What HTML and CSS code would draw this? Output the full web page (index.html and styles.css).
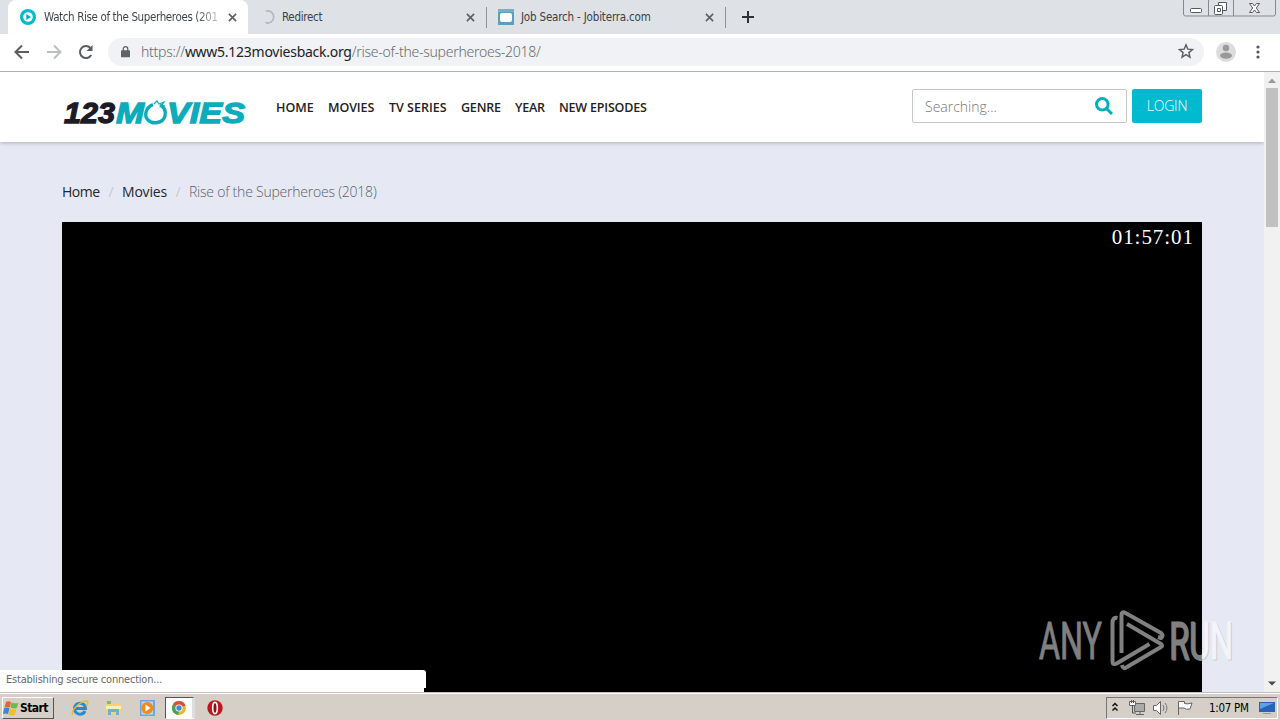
FILE: index.html
```html
<!DOCTYPE html>
<html lang="en">
<head>
  <meta charset="UTF-8">
  <meta name="viewport" content="width=device-width, initial-scale=1.0">
  <title>Watch Rise of the Superheroes (2018)</title>
  <link rel="stylesheet" href="styles.css">
</head>
<body>
  <!-- Browser tabs -->
  <div class="tabs">
    <div class="tab active">
      <svg class="favicon" viewBox="0 0 16 16"><circle cx="8" cy="8" r="8" fill="#00bcd0"/><circle cx="8" cy="8" r="4.800" fill="#fff"/><path d="M6.300 5 11 8l-4.700 3z" fill="#00aebf"/></svg>
      <span class="tab-title title-movie">Watch Rise of the Superheroes (201</span>
      <svg class="close" viewBox="0 0 10 10"><path d="M1 1l8 8M9 1L1 9"/></svg>
    </div>
    <div class="tab tab-redirect">
      <svg class="favicon" viewBox="0 0 16 16"><path d="M6 2.200A6 6 0 1 1 5.500 13.500" fill="none" stroke="#b5b8be" stroke-width="1.800"/></svg>
      <span class="tab-title title-redirect">Redirect</span>
      <svg class="close" viewBox="0 0 10 10"><path d="M1 1l8 8M9 1L1 9"/></svg>
    </div>
    <div class="tab tab-job">
      <svg class="favicon" viewBox="0 0 16 16"><path d="M0 0h16v16H0z" fill="#5c9fba"/><path d="M0 0h16v3H0z" fill="#72b1c8"/><rect x="2" y="4" width="12" height="9" rx="2" fill="#fff"/></svg>
      <span class="tab-title title-job">Job Search - Jobiterra.com</span>
      <svg class="close" viewBox="0 0 10 10"><path d="M1 1l8 8M9 1L1 9"/></svg>
    </div>
    <svg class="new-tab" viewBox="0 0 12 12"><path d="M6 0v12M0 6h12" stroke="#2e3136" stroke-width="2"/></svg>
    <div class="window-buttons">
      <svg viewBox="0 0 93 17" width="93" height="17"><path d="M.5 0v14q0 2 2 2h88q2 0 2-2V0M25.500 0v16M50.500 0v16" fill="none" stroke="#858991"/><rect x="7.500" y="8.500" width="11" height="4" rx="1" fill="#fff" stroke="#55585f"/><path d="M35.500 2.500h8v8h-8z" fill="#fff" stroke="#55585f"/><rect x="31.500" y="5.500" width="8" height="9" rx="1" fill="#fff" stroke="#55585f"/><path d="M34.500 8.500h3v3h-3z" fill="none" stroke="#55585f"/><path d="M66.500 3.500h3l2 2.500 2-2.500h3L73.300 8l3.200 4.500h-3l-2-2.500-2 2.500h-3L69.700 8z" fill="#fff" stroke="#55585f"/></svg>
    </div>
  </div>

  <!-- Address bar -->
  <div class="toolbar">
    <svg class="nav-icon" viewBox="0 0 16 16"><path d="M15 8H2M8 1.500L1.500 8 8 14.500" stroke="#5a5d62"/></svg>
    <svg class="nav-icon" viewBox="0 0 16 16"><path d="M1 8h13M8 1.500L14.500 8 8 14.500" stroke="#bcbec1"/></svg>
    <svg class="nav-icon" viewBox="0 0 16 16"><path d="M13.200 11A6 6 0 1 1 12.400 4" stroke="#5a5d62"/><path d="M14.500 1v6h-6z" fill="#5a5d62"/></svg>
    <div class="address">
      <svg class="lock" viewBox="0 0 10 13"><rect y="5" width="10" height="8" rx="1" fill="#5f6368"/><path d="M2.500 6V3.500a2.500 2.500 0 0 1 5 0V6" fill="none" stroke="#5f6368" stroke-width="1.400"/></svg>
      <span class="url">https://<b>www5.123moviesback.org</b>/rise-of-the-superheroes-2018/</span>
      <svg class="star" viewBox="0 0 16 16"><path d="M8 1.800l1.800 4.300 4.700.4-3.600 3.100 1.100 4.600L8 11.700l-4 2.500 1.100-4.600L1.500 6.500l4.700-.4z" fill="none" stroke="#5a5d62" stroke-width="1.400"/></svg>
    </div>
    <svg class="avatar" viewBox="0 0 20 20"><circle cx="10" cy="10" r="10" fill="#dcdcdc"/><circle cx="10" cy="6" r="3.200" fill="#999"/><ellipse cx="10" cy="13.600" rx="6" ry="3.100" fill="#999"/></svg>
    <svg class="dots" viewBox="0 0 4 14"><g fill="#55585d"><circle cx="2" cy="2" r="1.600"/><circle cx="2" cy="7" r="1.600"/><circle cx="2" cy="12" r="1.600"/></g></svg>
  </div>

  <!-- Page -->
  <div class="viewport">
    <div class="page">
      <header>
        <svg class="logo" viewBox="0 0 186 34">
          <g font-family="Liberation Sans, sans-serif" font-weight="bold" font-style="italic" font-size="30" stroke-width="1.300">
            <text x="2" y="26" textLength="51" lengthAdjust="spacingAndGlyphs" fill="#1b1c27" stroke="#1b1c27">123</text>
            <text x="54" y="26" textLength="28" lengthAdjust="spacingAndGlyphs" fill="#0cacbb" stroke="#0cacbb">M</text>
            <text x="105" y="26" textLength="78" lengthAdjust="spacingAndGlyphs" fill="#0cacbb" stroke="#0cacbb">VIES</text>
          </g>
          <path d="M91 7.500C83 11 82 19 86 23c5 5 15 3 17-4 1-5-1-9-5-11" fill="none" stroke="#0cacbb" stroke-width="3.400"/>
          <path d="M92 7l3-3 2 3 5-2-2 3 3 1" fill="none" stroke="#0cacbb" stroke-width="1.200"/>
        </svg>
        <nav>
          <a class="n1">HOME</a>
          <a class="n2">MOVIES</a>
          <a class="n3">TV SERIES</a>
          <a class="n4">GENRE</a>
          <a class="n5">YEAR</a>
          <a class="n6">NEW EPISODES</a>
        </nav>
        <div class="search">
          <span>Searching...</span>
          <svg viewBox="0 0 18 18"><circle cx="7.300" cy="7.300" r="5.800" fill="none" stroke="#00b1ba" stroke-width="3"/><path d="M11.500 11.500L17 17" stroke="#00b1ba" stroke-width="3"/></svg>
        </div>
        <div class="login"><span>LOGIN</span></div>
      </header>
      <div class="breadcrumb">
        <a class="b-home">Home</a><i>/</i><a class="b-movies">Movies</a><i>/</i><span>Rise of the Superheroes (2018)</span>
      </div>
      <div class="player"><span>01:57:01</span></div>
    </div>
    <div class="scrollbar">
      <svg viewBox="0 0 16 16"><path d="M4 11l4-4.500 4 4.500z" fill="#999"/></svg>
      <div class="thumb"></div>
      <svg class="down" viewBox="0 0 16 16"><path d="M4 5.500h8L8 9.500z" fill="#4a4a4a"/></svg>
    </div>
    <div class="status"><span>Establishing secure connection...</span></div>
  </div>

  <!-- Taskbar -->
  <div class="taskbar">
    <div class="start">
      <svg viewBox="0 0 16 16"><path d="M3 2q2-1.500 5 0L6.800 7.500Q4 6.500 1.500 7.500z" fill="#e5642c"/><path d="M8.500 2.500q3 1.500 7 .2L13.800 8q-3 1-6.300-.5z" fill="#72b844"/><path d="M1.200 8.200q2.700-1.400 5.300 0L5 14q-2.500-1.200-5 0z" fill="#3d83cf"/><path d="M7 8.500q3 1.500 6.500.5l-1.700 6q-3 1-6.300-.6z" fill="#f4bd2e"/></svg>
      <span>Start</span>
    </div>
    <div class="quick">
      <svg viewBox="0 0 18 18"><path d="M14 12a5.500 5.500 0 1 1 .5-2.500H4.500" fill="none" stroke="#258bd6" stroke-width="3"/><path d="M2 16C-1 12 9 2 16 2c2 1 0 4-1 5" fill="none" stroke="#e5bd35" stroke-width="1.400"/></svg>
      <svg viewBox="0 0 18 18"><path d="M1 3h5l1 2h9v10H1z" fill="#eed577"/><path d="M2 2h4v3H2z" fill="#7eba75"/><path d="M1 7h15v3H1z" fill="#fbf0b2"/><path d="M3 10h11v6h-3v-3H6v3H3z" fill="#6dafd5"/></svg>
      <svg viewBox="0 0 18 18"><path d="M1 1h15v16H1z" fill="#6aa8df"/><path d="M2.500 2.500H14v13H2.500z" fill="#b8d8f2"/><circle cx="8.300" cy="9" r="6" fill="#f18a1d"/><path d="M6.500 5.500l5 3.500-5 3.500z" fill="#fff"/></svg>
      <div class="chrome-task">
        <svg viewBox="0 0 16 16"><circle cx="8" cy="8" r="7" fill="#e8b928"/><path d="M8 8L2 4.300A7 7 0 0 1 14.500 5.500z" fill="#d94c3d"/><path d="M8 8L2 4.300A7 7 0 0 0 7.500 15z" fill="#46a257"/><circle cx="8" cy="8" r="3.600" fill="#fff"/><circle cx="8" cy="8" r="2.700" fill="#4585dc"/></svg>
      </div>
      <svg class="opera" viewBox="0 0 18 18"><circle cx="9" cy="9" r="7.700" fill="#bd171d"/><ellipse cx="9" cy="9" rx="2.300" ry="5.600" fill="#8b1015" stroke="#fff" stroke-width="1.600"/></svg>
    </div>
    <div class="tray">
      <svg class="chevrons" viewBox="0 0 8 12"><path d="M1.500 4L4 1.500 6.500 4M1.500 8.500L4 6l2.500 2.500" fill="none" stroke="#111" stroke-width="1.500"/></svg>
      <svg class="network" viewBox="0 0 16 16"><path d="M5.500 3.500h10v8h-10z" fill="#aaa" stroke="#666"/><path d="M7 14.500h8M11 12v2" stroke="#666"/><path d="M.5 1.500h6v4h-6z" fill="#fff" stroke="#666"/><path d="M2.500 0v3M4.500 0v3M3.500 5.500V13H7" fill="none" stroke="#555"/></svg>
      <svg class="sound" viewBox="0 0 16 16"><path d="M.5 5.500h3l4-4v13l-4-4h-3z" fill="#fff" stroke="#666"/><path d="M10 5q2 3 0 6M12 3q4 5 0 10" fill="none" stroke="#777"/></svg>
      <svg class="flag" viewBox="0 0 16 16"><path d="M1.500 15V1.500h6v2q3 1 7.500-.5L13 9q-4 1-6-1H2" fill="#fff" stroke="#666"/></svg>
      <span class="clock">1:07 PM</span>
      <svg class="desktop" viewBox="0 0 16 14"><path d="M0 1h16v10H0z" fill="#2962b9"/><path d="M1 2h14L1 8z" fill="#62a0e4"/><path d="M4 12h8v1H4z" fill="#8a99aa"/></svg>
    </div>
  </div>

  <!-- Watermark over the desktop -->
  <svg class="watermark" viewBox="0 0 205 70">
    <defs>
      <linearGradient id="runFade" gradientUnits="userSpaceOnUse" x1="0" y1="0" x2="200" y2="0">
        <stop offset=".835" stop-color="#808080"/>
        <stop offset=".835" stop-color="#f3f4f8"/>
      </linearGradient>
      <linearGradient id="runEdge" gradientUnits="userSpaceOnUse" x1="0" y1="0" x2="200" y2="0">
        <stop offset=".835" stop-color="#808080"/>
        <stop offset=".835" stop-color="#c8cbd5"/>
      </linearGradient>
    </defs>
    <g font-family="Roboto, sans-serif" font-size="52" stroke-width="1">
      <text x="4" y="54" textLength="63" lengthAdjust="spacingAndGlyphs" fill="#808080" stroke="#808080">ANY</text>
      <text x="135" y="55" textLength="64" lengthAdjust="spacingAndGlyphs" fill="url(#runEdge)" stroke="url(#runEdge)">RUN</text>
      <text x="134" y="54" textLength="64" lengthAdjust="spacingAndGlyphs" fill="url(#runFade)" stroke="url(#runFade)">RUN</text>
    </g>
    <g fill="none" stroke="#808080" stroke-width="4" stroke-linejoin="round">
      <path d="M86.500 48V10q0-4 4-2L126 28q3 3 0 5l-3-1"/>
      <path d="M82.500 13q-5-1-5 5v38q0 5 5 2l32-19"/>
      <path d="M92 19l34 20q2 2 0 3L92 62q-4 3-5-2"/>
    </g>
  </svg>
</body>
</html>
```
FILE: styles.css
```css
/* Desktop */
body {
  margin: 0;
  width: 1280px;
  height: 720px;
  overflow: hidden;
  display: flex;
  flex-direction: column;
  position: relative;
  font-family: "DejaVu Sans Condensed", "DejaVu Sans", sans-serif;
}

svg {
  display: block;
  flex: none;
}

/* Browser tabs */
.tabs {
  height: 34px;
  flex: none;
  display: flex;
  background-color: #dee1e6;
  padding-left: 8px;
}

.tab {
  width: 239px;
  height: 34px;
  box-sizing: border-box;
  display: flex;
  align-items: center;
  padding: 0 11px 0 12px;
  border-right: 1px solid transparent;
  border-image: linear-gradient(transparent 8px, #8f9298 8px, #8f9298 27px, transparent 27px) 1;
}

.tab.active {
  width: 240px;
  background-color: #fff;
  border: 0;
  border-radius: 8px 8px 0 0;
}

.tab-job {
  padding-left: 11px;
}

.favicon {
  width: 16px;
  height: 16px;
}

.tab-title {
  margin-left: 8px;
  white-space: nowrap;
  font-size: 11.5px;
  color: #3c4043;
}

.title-movie {
  letter-spacing: -0.37px;
  color: transparent;
  background: linear-gradient(90deg, #3c4043 152px, #c8c8c8 174px);
  -webkit-background-clip: text;
  background-clip: text;
}

.title-redirect {
  letter-spacing: -0.3px;
  margin-left: 6px;
}

.title-job {
  letter-spacing: -0.18px;
  margin-left: 7px;
}

.close {
  width: 9px;
  height: 9px;
  margin-left: auto;
  stroke: #5c5f64;
  stroke-width: 1.8;
}

.new-tab {
  width: 12px;
  height: 12px;
  margin: 11px 0 0 16px;
}

.window-buttons {
  margin: 0 4px 0 auto;
}

/* Address bar */
.toolbar {
  height: 37px;
  flex: none;
  display: flex;
  align-items: center;
  padding: 0 13px 0 14px;
  background-color: #fff;
  border-bottom: 1px solid #aeb0b3;
}

.nav-icon {
  width: 16px;
  height: 16px;
  margin: -2px 16px 0 0;
  fill: none;
  stroke-width: 2;
}

.address {
  width: 1096px;
  height: 28px;
  box-sizing: border-box;
  display: flex;
  align-items: center;
  padding: 0 10px 2px 13px;
  margin: -1px 0 0 -2px;
  background-color: #f0f2f5;
  border-radius: 14px;
}

.lock {
  width: 9px;
  height: 13px;
}

.url {
  margin-left: 11px;
  font-family: "Noto Sans", sans-serif;
  font-size: 14px;
  font-weight: 300;
  letter-spacing: -0.26px;
  color: #686c70;
}

.url b {
  font-weight: 400;
  color: #202124;
}

.star {
  width: 16px;
  height: 16px;
  margin-left: auto;
}

.avatar {
  width: 20px;
  height: 20px;
  margin: -2px 0 0 12px;
}

.dots {
  width: 4px;
  height: 14px;
  margin: -1px 7px 0 auto;
}

/* Page area */
.viewport {
  height: 620px;
  flex: none;
  display: flex;
  position: relative;
}

.page {
  width: 1264px;
  overflow: hidden;
  background-color: #e6e9f3;
}

header {
  height: 70px;
  box-sizing: border-box;
  display: flex;
  padding: 17px 62px 0;
  background-color: #fff;
  box-shadow: 0 1px 4px rgba(0, 0, 0, 0.25);
}

.logo {
  width: 186px;
  height: 34px;
  margin-top: 8px;
}

nav {
  display: flex;
  gap: 14px;
  margin: 10px 0 0 28px;
  font-family: "Open Sans", sans-serif;
  font-size: 12.5px;
  font-weight: 600;
  line-height: 18px;
  color: #222;
  white-space: nowrap;
}

.n1 { width: 38px; letter-spacing: 0; }
.n2 { width: 47px; letter-spacing: -0.1px; }
.n3 { width: 58px; letter-spacing: 0; }
.n4 { width: 40px; letter-spacing: -0.2px; }
.n5 { width: 30px; letter-spacing: -0.2px; }
.n6 { width: 88px; letter-spacing: -0.2px; }

.search {
  width: 215px;
  height: 34px;
  box-sizing: border-box;
  display: flex;
  align-items: center;
  justify-content: space-between;
  margin-left: auto;
  padding: 0 13px 0 12px;
  border: 1px solid #c5c7c8;
  border-radius: 2px;
  font-family: "Open Sans", sans-serif;
  font-size: 14px;
  font-weight: 300;
  color: #777;
}

.search svg {
  width: 18px;
  height: 18px;
}

.login {
  width: 70px;
  height: 34px;
  margin-left: 5px;
  border-radius: 2px;
  background-color: #00bad0;
  color: #fff;
  font-family: "Open Sans", sans-serif;
  font-size: 14px;
  font-weight: 300;
  letter-spacing: -0.2px;
  line-height: 33px;
  text-align: center;
}

.breadcrumb {
  display: flex;
  height: 20px;
  padding: 40px 62px 20px;
  font-family: "Open Sans", sans-serif;
  font-size: 14px;
  line-height: 20px;
  color: #222633;
}

.breadcrumb i {
  width: 22px;
  text-align: center;
  font-style: normal;
  color: #c5c9d1;
}

.breadcrumb span {
  font-weight: 300;
  letter-spacing: -0.22px;
  color: #5c606c;
}

.b-home { width: 38px; letter-spacing: -0.5px; }
.b-movies { width: 45px; letter-spacing: -0.2px; }

.player {
  width: 1140px;
  height: 480px;
  margin: 0 62px;
  background-color: #000;
  color: #fff;
  font-family: "Liberation Serif", serif;
  font-size: 21px;
  line-height: 30px;
  text-align: right;
}

.player span {
  margin-right: 8px;
  letter-spacing: 0.95px;
}

/* Scrollbar */
.scrollbar {
  width: 16px;
  display: flex;
  flex-direction: column;
  background-color: #f1f1f1;
}

.thumb {
  width: 12px;
  height: 139px;
  margin: 0 2px;
  background-color: #c1c1c1;
}

.down {
  margin-top: auto;
}

/* Loading status */
.status {
  position: absolute;
  left: 0;
  bottom: 0;
  width: 424px;
  height: 22px;
  background: linear-gradient(#fff, #fff) 0 0 / 426px 18px no-repeat, linear-gradient(#fff, #fff) 0 0 / 424px 22px no-repeat;
  padding-right: 2px;
  border-radius: 0 3px 0 0;
  color: #686868;
  font-size: 11px;
  letter-spacing: -0.21px;
  line-height: 19px;
}

.status span {
  margin-left: 6px;
}

/* Taskbar */
.taskbar {
  height: 28px;
  flex: none;
  box-sizing: border-box;
  display: flex;
  align-items: center;
  padding: 2px 2px 0;
  background-color: #d5cfc7;
  border-top: 1px solid #c4c2bc;
  box-shadow: inset 0 1px #fff;
}

.start {
  width: 52px;
  height: 22px;
  box-sizing: border-box;
  display: flex;
  align-items: center;
  border: 1px solid #fff;
  border-right-color: #555;
  border-bottom-color: #555;
  font-size: 12px;
  font-weight: bold;
  letter-spacing: -0.6px;
}

.start svg {
  width: 16px;
  height: 16px;
  margin: 0 1px 0 0;
}

.quick {
  display: flex;
  align-items: center;
  margin-left: 17px;
}

.quick svg {
  width: 18px;
  height: 18px;
  margin-right: 16px;
}

.chrome-task {
  width: 30px;
  height: 22px;
  box-sizing: border-box;
  margin-left: -8px;
  border: 1px solid #555;
  border-right: 3px solid #ddd;
  border-bottom-color: #fff;
  background-color: #fff;
}

.chrome-task svg {
  width: 16px;
  height: 16px;
  margin: 2px 5px;
}

.quick .opera {
  margin-left: 11px;
}

.tray {
  width: 172px;
  height: 22px;
  box-sizing: border-box;
  display: flex;
  align-items: center;
  margin-left: auto;
  border: 1px solid #777;
  border-right-color: #fff;
  border-bottom-color: #fff;
}

.chevrons { width: 8px; height: 12px; margin-left: 4px; }
.network { width: 16px; height: 16px; margin-left: 10px; }
.sound { width: 16px; height: 16px; margin-left: 8px; }
.flag { width: 16px; height: 16px; margin-left: 8px; }

.clock {
  width: 42px;
  margin-left: 16px;
  font-size: 11.5px;
  letter-spacing: -0.3px;
  white-space: nowrap;
}

.desktop {
  width: 16px;
  height: 14px;
  margin-left: 8px;
}

/* Watermark */
.watermark {
  position: absolute;
  left: 1035px;
  top: 605px;
  width: 205px;
  height: 70px;
}
```
